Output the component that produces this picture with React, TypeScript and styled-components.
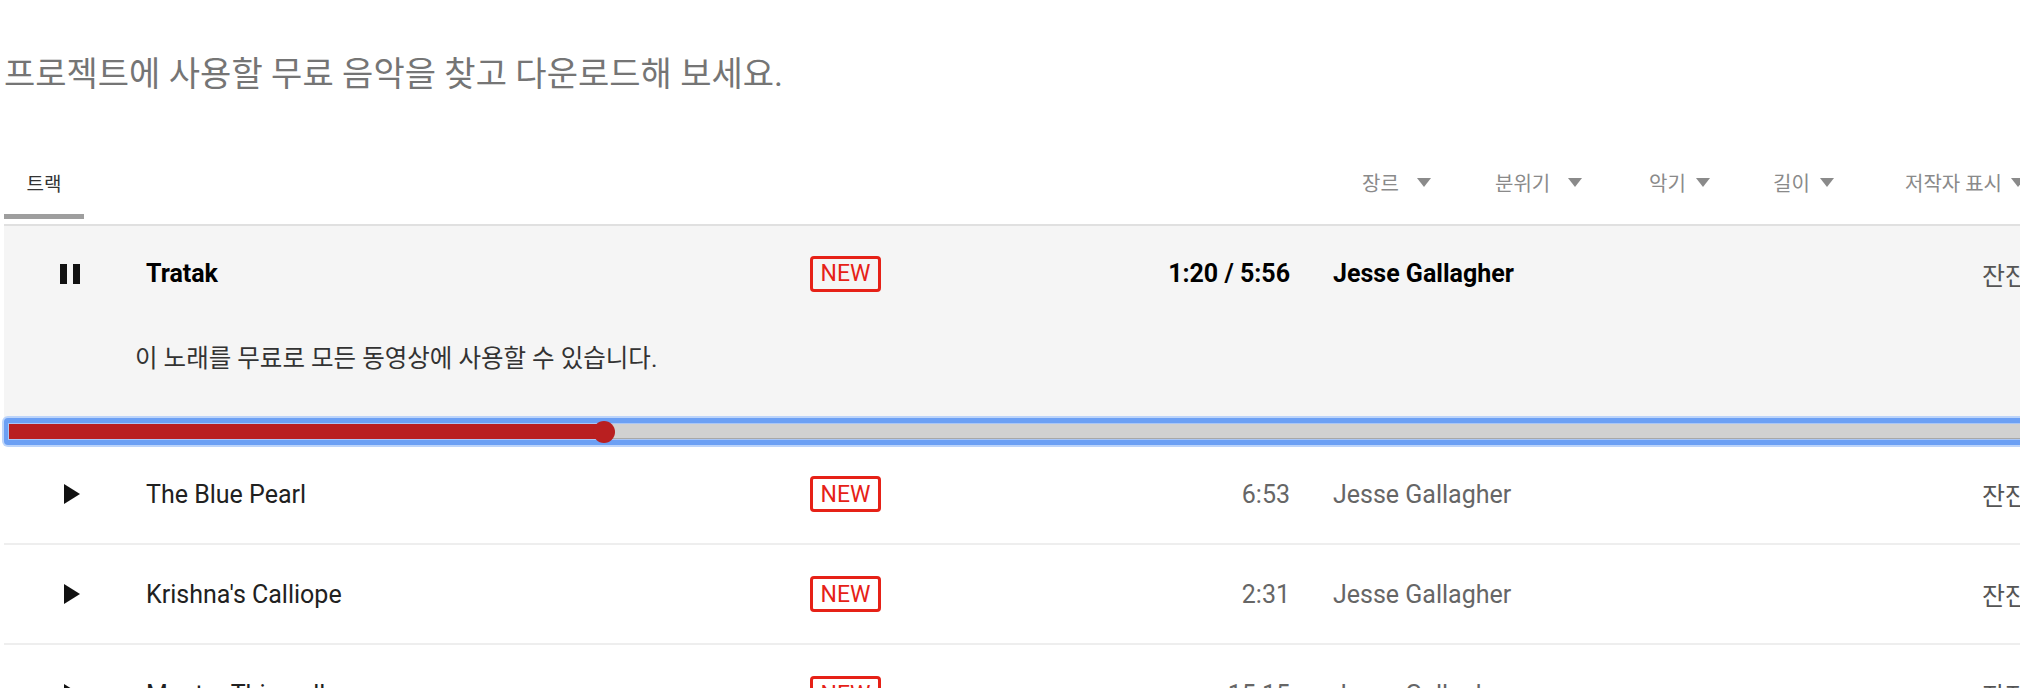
import styled, { createGlobalStyle } from "styled-components"

const GlobalStyle = createGlobalStyle`
  html, body {
    margin: 0;
    padding: 0;
    background: #fff;
    overflow: hidden;
  }
  body {
    font-family: Roboto, "Noto Sans CJK KR", sans-serif;
    color: #212121;
  }
`

const Page = styled.div`
  width: 2660px;
  padding-left: 4px;
`

const PageTitle = styled.h1`
  margin: 0;
  padding: 54px 0 56px;
  font-size: 34px;
  line-height: 40px;
  font-weight: 400;
  color: #757575;
`

const HeaderBar = styled.div`
  display: grid;
  grid-template-columns: 1358px auto;
  align-items: start;
  border-bottom: 2px solid #e0e0e0;
`

const Tab = styled.div`
  width: 80px;
  height: 64px;
  display: flex;
  align-items: center;
  justify-content: center;
  border-bottom: 5px solid #9e9e9e;
  margin-bottom: 5px;
  font-size: 19px;
  color: #333;
`

const Filters = styled.div`
  display: grid;
  grid-template-columns: 133px 154px 124px 132px auto;
  height: 64px;
  align-items: center;
`

const FilterButton = styled.div<{ $gap: number }>`
  display: flex;
  align-items: center;
  gap: ${p => p.$gap}px;
  font-size: 20px;
  color: #8a8a8a;
  white-space: nowrap;
`

const Row = styled.div`
  display: grid;
  grid-template-columns: 142px 664px 71px 409px 692px 1fr;
  align-items: center;
  height: 95px;
  font-size: 25px;
`

const ListItem = styled.div`
  border-bottom: 2px solid #eeeeee;

  ${Row} {
    height: 98px;
  }
`

const PlayingItem = styled.div`
  background: #f5f5f5;
  padding-bottom: 41px;
  color: #000;
  font-weight: 700;
`

const IconCell = styled.div<{ $offset: number }>`
  display: flex;
  align-items: center;
  padding-left: ${p => p.$offset}px;
`

const TrackTitle = styled.div<{ $active?: boolean }>`
  color: ${p => (p.$active ? "#000" : "#212121")};
  white-space: nowrap;
`

const NewBadge = styled.span`
  box-sizing: border-box;
  display: inline-flex;
  align-items: center;
  justify-content: center;
  width: 71px;
  height: 36px;
  border: 3px solid #e62117;
  border-radius: 4px;
  color: #e62117;
  font-size: 23px;
  font-weight: 400;
  line-height: 1;
`

const Time = styled.div<{ $active?: boolean }>`
  text-align: right;
  color: ${p => (p.$active ? "#000" : "#666")};
  white-space: nowrap;
`

const Artist = styled.div<{ $active?: boolean }>`
  padding-left: 43px;
  color: ${p => (p.$active ? "#000" : "#666")};
  white-space: nowrap;
`

const Mood = styled.div`
  font-size: 25px;
  font-weight: 400;
  color: #555;
  white-space: nowrap;
`

const Description = styled.p`
  margin: 20px 0 0;
  padding-left: 131px;
  font-size: 24.5px;
  line-height: 36px;
  font-weight: 400;
  color: #333;
`

const SliderFrame = styled.div`
  border: 5px solid #6ca0f4;
  border-left-width: 4px;
  border-radius: 4px;
  padding: 1px;
  background: #a9c6f6;
  box-shadow: 0 0 0 2px #bcd4fa;
`

const Track = styled.div`
  position: relative;
  height: 15px;
  background: #d1d1d1;
  box-shadow: inset 0 -1px 0 #a8a8a8;
`

const Progress = styled.div`
  position: relative;
  height: 100%;
  background: #b91f20;
`

const Thumb = styled.span`
  position: absolute;
  right: -11px;
  top: 50%;
  width: 22px;
  height: 22px;
  margin-top: -11px;
  border-radius: 50%;
  background: #b91f20;
`

const Caret = () => (
  <svg width="14" height="9" viewBox="0 0 14 9">
    <polygon points="0,0 14,0 7,9" fill="#8a8a8a" />
  </svg>
)

const PauseIcon = () => (
  <svg width="20" height="20" viewBox="0 0 20 20">
    <rect x="0" y="0" width="7" height="20" fill="#111" />
    <rect x="13" y="0" width="7" height="20" fill="#111" />
  </svg>
)

const PlayIcon = () => (
  <svg width="16" height="20" viewBox="0 0 16 20">
    <polygon points="0,0 16,10 0,20" fill="#111" />
  </svg>
)

const filters = [
  { label: "장르", gap: 18 },
  { label: "분위기", gap: 18 },
  { label: "악기", gap: 10 },
  { label: "길이", gap: 10 },
  { label: "저작자 표시", gap: 9 },
]

const tracks = [
  { title: "The Blue Pearl", time: "6:53", artist: "Jesse Gallagher", mood: "잔잔함" },
  { title: "Krishna's Calliope", time: "2:31", artist: "Jesse Gallagher", mood: "잔잔함" },
  { title: "Mantra Thiruvalluvar", time: "15:15", artist: "Jesse Gallagher", mood: "잔잔함" },
]

const TRACK_WIDTH = 2648
const elapsed = 80
const duration = 356

export default function App() {
  const progress = (elapsed / duration) * TRACK_WIDTH

  return (
    <>
      <GlobalStyle />
      <Page>
        <PageTitle>프로젝트에 사용할 무료 음악을 찾고 다운로드해 보세요.</PageTitle>

        <HeaderBar>
          <Tab>트랙</Tab>
          <Filters>
            {filters.map(f => (
              <FilterButton key={f.label} $gap={f.gap}>
                {f.label}
                <Caret />
              </FilterButton>
            ))}
          </Filters>
        </HeaderBar>

        <PlayingItem>
          <Row>
            <IconCell $offset={56}>
              <PauseIcon />
            </IconCell>
            <TrackTitle $active>Tratak</TrackTitle>
            <div>
              <NewBadge>NEW</NewBadge>
            </div>
            <Time $active>1:20 / 5:56</Time>
            <Artist $active>Jesse Gallagher</Artist>
            <Mood>잔잔함</Mood>
          </Row>
          <Description>이 노래를 무료로 모든 동영상에 사용할 수 있습니다.</Description>
        </PlayingItem>

        <SliderFrame>
          <Track>
            <Progress style={{ width: progress }}>
              <Thumb />
            </Progress>
          </Track>
        </SliderFrame>

        {tracks.map(t => (
          <ListItem key={t.title}>
            <Row>
              <IconCell $offset={60}>
                <PlayIcon />
              </IconCell>
              <TrackTitle>{t.title}</TrackTitle>
              <div>
                <NewBadge>NEW</NewBadge>
              </div>
              <Time>{t.time}</Time>
              <Artist>{t.artist}</Artist>
              <Mood>{t.mood}</Mood>
            </Row>
          </ListItem>
        ))}
      </Page>
    </>
  )
}
